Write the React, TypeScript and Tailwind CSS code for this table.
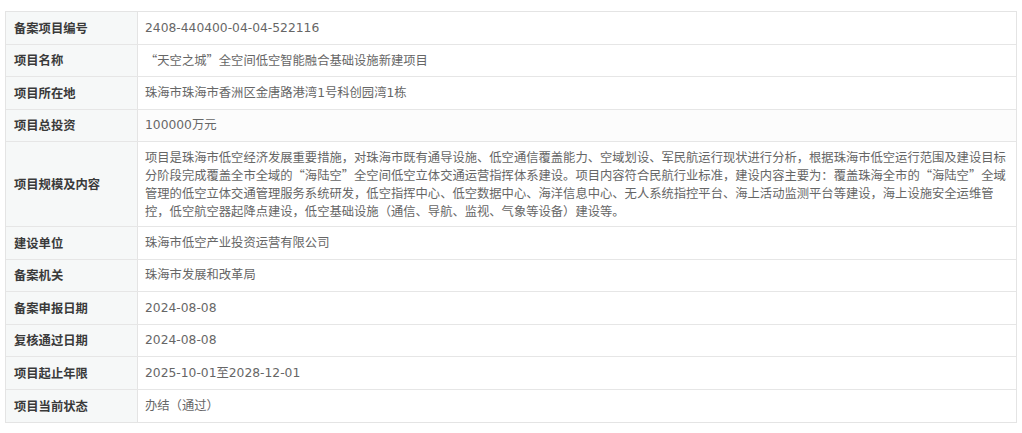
const rows: { label: string; value: string[]; cjk?: boolean; tall?: boolean }[] = [
  { label: "备案项目编号", value: ["2408-440400-04-04-522116"] },
  { label: "项目名称", value: ["“天空之城”全空间低空智能融合基础设施新建项目"], cjk: true },
  { label: "项目所在地", value: ["珠海市珠海市香洲区金唐路港湾1号科创园湾1栋"] },
  { label: "项目总投资", value: ["100000万元"] },
  {
    label: "项目规模及内容",
    value: [
      "项目是珠海市低空经济发展重要措施，对珠海市既有通导设施、低空通信覆盖能力、空域划设、军民航运行现状进行分析，根据珠海市低空运行范围及建设目标",
      "分阶段完成覆盖全市全域的“海陆空”全空间低空立体交通运营指挥体系建设。项目内容符合民航行业标准，建设内容主要为：覆盖珠海全市的“海陆空”全域",
      "管理的低空立体交通管理服务系统研发，低空指挥中心、低空数据中心、海洋信息中心、无人系统指控平台、海上活动监测平台等建设，海上设施安全运维管",
      "控，低空航空器起降点建设，低空基础设施（通信、导航、监视、气象等设备）建设等。",
    ],
    cjk: true,
    tall: true,
  },
  { label: "建设单位", value: ["珠海市低空产业投资运营有限公司"] },
  { label: "备案机关", value: ["珠海市发展和改革局"] },
  { label: "备案申报日期", value: ["2024-08-08"] },
  { label: "复核通过日期", value: ["2024-08-08"] },
  { label: "项目起止年限", value: ["2025-10-01至2028-12-01"] },
  { label: "项目当前状态", value: ["办结（通过）"] },
];

const App = () => {
  return (
    <div className="w-[1022px] h-[433px] bg-white pt-[11px] pl-[5px]">
      <div className="w-[1012px] border border-[#e4e4e4] font-['Noto_Sans_CJK_SC',sans-serif] text-[12.3px]">
        {rows.map((row, i) => (
          <div
            key={row.label}
            className={`flex border-b border-[#e6e6e6] last:border-b-0 ${row.tall ? "h-[85px]" : "h-[32.5px]"}`}
          >
            <div className="w-[132px] shrink-0 flex items-center pl-2 bg-[#f6f8f8] border-r border-[#e4e4e4] font-bold text-[#3a3a3a]">
              {row.label}
            </div>
            <div
              className={`flex-1 flex flex-col justify-center pl-[7px] text-[#666] whitespace-nowrap ${i === 3 ? "bg-[#fcfcfc]" : "bg-white"} ${row.cjk ? "" : "font-['DejaVu_Sans','Noto_Sans_CJK_SC',sans-serif]"}`}
            >
              {row.value.map((line) => (
                <div key={line} className="leading-[18px]">
                  {line}
                </div>
              ))}
            </div>
          </div>
        ))}
      </div>
    </div>
  );
};

export default App;
